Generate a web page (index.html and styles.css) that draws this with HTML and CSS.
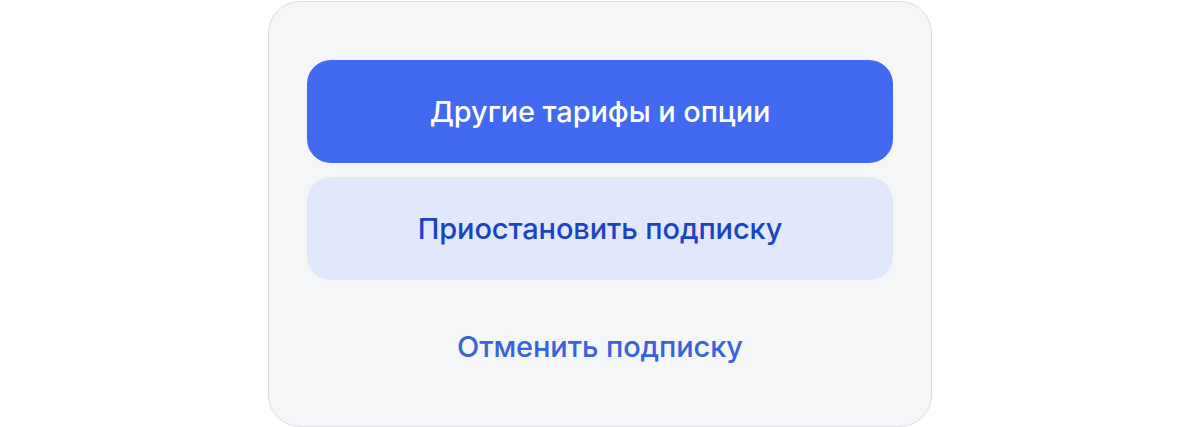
FILE: index.html
```html
<!DOCTYPE html>
<html lang="ru">

<head>
    <meta charset="UTF-8">
    <meta name="viewport" content="width=device-width, initial-scale=1.0">
    <title>Управление подпиской</title>
    <link rel="stylesheet" href="styles.css">
</head>

<body>

    <div class="sheet">
        <button class="btn btn-primary">Другие тарифы и опции</button>
        <button class="btn btn-secondary">Приостановить подписку</button>
        <button class="btn-link">Отменить подписку</button>
    </div>

</body>

</html>
```

FILE: styles.css
```css
body {
    font-family: 'Inter', 'Noto Sans', sans-serif;
    margin: 0;
    padding: 0;
    background-color: #fff;
    display: flex;
    justify-content: center;
}

.sheet {
    box-sizing: border-box;
    width: 664px;
    height: 426px;
    margin-top: 1px;
    padding: 58px 38px 0;
    background-color: #f5f6f8;
    border: 1px solid #dcdee3;
    border-radius: 32px;
    display: flex;
    flex-direction: column;
    gap: 14px;
}

.btn {
    height: 103px;
    border: none;
    border-radius: 24px;
    font-family: inherit;
    font-size: 29px;
    font-weight: 500;
    letter-spacing: -0.1px;
    cursor: pointer;
}

.btn-primary {
    background-color: #4169f2;
    color: #fff;
}

.btn-secondary {
    background-color: #e1e8fc;
    color: #1a43c6;
}

.btn-link {
    margin-top: 34px;
    border: none;
    background: none;
    font-family: inherit;
    font-size: 29px;
    font-weight: 500;
    letter-spacing: -0.1px;
    color: #3a62da;
    cursor: pointer;
}
```
